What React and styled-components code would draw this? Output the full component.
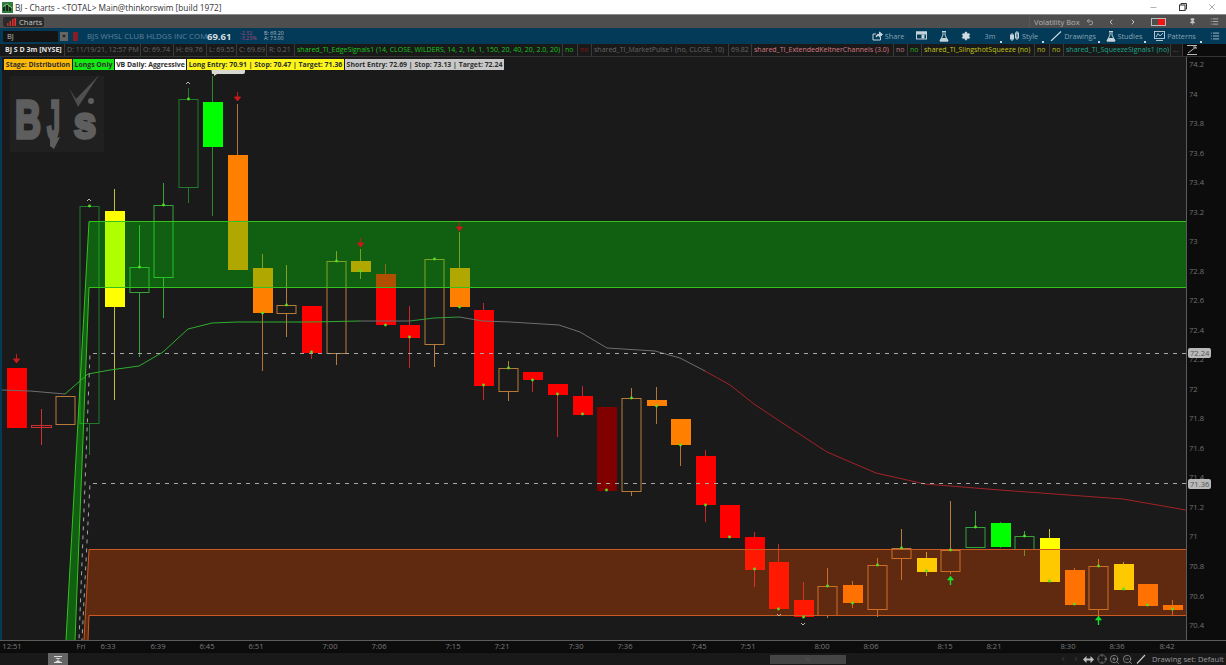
import React from 'react';
import styled, { createGlobalStyle } from 'styled-components';
import { ChevronLeft, ChevronRight, Crosshair, List, Minus, Pin, Settings, Undo2, X, ZoomIn, ZoomOut } from 'lucide-react';

const GlobalStyle = createGlobalStyle`
  html, body { margin: 0; padding: 0; background: #1a1a1a; }
  body { font-family: "Open Sans", "Liberation Sans", sans-serif; overflow: hidden; }
`;

const Page = styled.div`
  width: 1226px;
  height: 665px;
  display: flex;
  flex-direction: column;
  overflow: hidden;
  background: #033a58;
`;

const TitleBar = styled.div`
  height: 14px;
  background: #fff;
  display: flex;
  align-items: center;
  color: #333;
  font-size: 8.3px;
  padding-left: 2px;
  flex: none;
`;
const TitleText = styled.span`
  margin-left: 2px;
  flex: 1;
`;
const WinBtn = styled.div`
  width: 29px;
  display: flex;
  justify-content: center;
  color: #333;
`;

const TabBar = styled.div`
  height: 14px;
  background: #4e4e4e;
  border-top: 1px solid #8a8a8a;
  box-sizing: border-box;
  display: flex;
  align-items: center;
  flex: none;
`;
const Tab = styled.div`
  margin-left: 3px;
  width: 41px;
  height: 10px;
  background: #2b2b2b;
  border-radius: 2px;
  display: flex;
  align-items: center;
  gap: 3px;
  padding-left: 4px;
  box-sizing: border-box;
  color: #c8c8c8;
  font-size: 7.6px;
`;
const Spacer = styled.div`
  flex: 1;
`;
const TabLabel = styled.div`
  color: #b4b4b4;
  font-size: 7.6px;
  width: 53px;
  border-left: 1px solid #5a5a5a;
  padding-left: 4px;
  box-sizing: border-box;
  white-space: nowrap;
`;
const TabIcon = styled.div`
  width: ${(p) => p.$w}px;
  display: flex;
  justify-content: center;
  color: #c4c4c4;
`;
const Switch = styled.div`
  width: 15px;
  height: 8px;
  border: 1px solid #bbb;
  box-sizing: border-box;
  display: flex;
  justify-content: flex-end;
  &::after {
    content: '';
    width: 7px;
    background: #f01414;
  }
`;

const ToolBar = styled.div`
  height: 16px;
  background: #033a58;
  display: flex;
  align-items: center;
  flex: none;
  padding-left: 3px;
`;
const SymbolInput = styled.div`
  width: 55px;
  height: 11px;
  background: #141414;
  color: #bdbdbd;
  font-size: 7.5px;
  line-height: 11px;
  padding-left: 4px;
  box-sizing: border-box;
`;
const DropBtn = styled.div`
  width: 8px;
  height: 9px;
  margin-left: 2px;
  background: #666;
  display: flex;
  align-items: center;
  justify-content: center;
  &::after {
    content: '';
    border: 2px solid transparent;
    border-top: 3px solid #222;
    margin-top: 3px;
  }
`;
const SymbolMark = styled.div`
  width: 5px;
  height: 9px;
  margin-left: 5px;
  background: #8c1c24;
  border-radius: 1px;
`;
const CompanyName = styled.div`
  margin-left: 9px;
  width: 120px;
  color: #5f8298;
  font-size: 7.9px;
  white-space: nowrap;
`;
const LastPrice = styled.div`
  color: #d5dde2;
  font-size: 9.5px;
  font-weight: 700;
  width: 33px;
`;
const Stack = styled.div`
  width: ${(p) => p.$w}px;
  color: ${(p) => p.$color};
  font-size: 5.3px;
  line-height: 5.5px;
`;
const ToolGroup = styled.div`
  display: flex;
  margin-left: auto;
  height: 16px;
`;
const ToolItem = styled.div`
  position: relative;
  width: ${(p) => p.$w}px;
  display: flex;
  align-items: center;
  justify-content: center;
  gap: 2px;
  color: #86a3b6;
  font-size: 7.3px;
  white-space: nowrap;
  &::after {
    content: '';
    display: ${(p) => (p.$corner ? 'block' : 'none')};
    position: absolute;
    right: 1px;
    bottom: 1px;
    border-right: 2px solid #c8d4dc;
    border-bottom: 2px solid #c8d4dc;
    width: 0;
    height: 0;
  }
`;

const StudyRow = styled.div`
  height: 13px;
  background: #191919;
  display: flex;
  flex: none;
  padding-left: 3px;
  border-bottom: 1px solid #333;
  box-sizing: border-box;
`;
const StudyCell = styled.div`
  width: ${(p) => p.$w}px;
  flex: none;
  box-sizing: border-box;
  padding-left: 2px;
  color: ${(p) => p.$color || '#666'};
  font-size: ${(p) => p.$size || 7}px;
  font-weight: ${(p) => (p.$bold ? 700 : 400)};
  line-height: 12px;
  white-space: nowrap;
  overflow: hidden;
  border-right: 1px solid #3a3a3a;
`;
const CollapseCell = styled.div`
  flex: 1;
  background: #0c0c0c;
  display: flex;
  padding-left: 4px;
  align-items: center;
`;

const ChartRow = styled.div`
  position: relative;
  height: 583px;
  display: flex;
  flex: none;
  padding-left: 2px;
  background: #033a58;
`;
const ChartSvg = styled.svg`
  display: block;
  width: 1184px;
  height: 583px;
  flex: none;
  background: #1a1a1a;
`;
const PriceAxis = styled.div`
  position: relative;
  flex: 1;
  background: #0c0c0c;
  border-left: 1px solid #5c5c5c;
  overflow: hidden;
`;
const PriceTick = styled.div`
  position: absolute;
  left: 2px;
  color: #717171;
  font-size: 7.6px;
  line-height: 10px;
  transform: translateY(-50%);
`;
const PriceTag = styled(PriceTick)`
  left: 1px;
  padding: 0 2px;
  background: #b9b9b9;
  color: #555;
  border-radius: 2px;
`;
const LabelStrip = styled.div`
  position: absolute;
  top: 2px;
  left: 4px;
  display: flex;
  gap: 1px;
`;
const Badge = styled.div`
  width: ${(p) => p.$w}px;
  height: 11px;
  background: ${(p) => p.$bg};
  color: #2e2e2e;
  font-size: 6.9px;
  font-weight: 700;
  line-height: 11px;
  text-align: center;
  white-space: nowrap;
  overflow: hidden;
`;

const TimeAxis = styled.div`
  position: relative;
  height: 12px;
  background: #0c0c0c;
  border-top: 1px solid #5c5c5c;
  box-sizing: border-box;
  flex: none;
`;
const TimeTick = styled.div`
  position: absolute;
  top: 0;
  color: #7b7b7b;
  font-size: 7.6px;
  line-height: 11px;
  transform: translateX(-50%);
`;
const BottomBar = styled.div`
  height: 13px;
  background: #191919;
  display: flex;
  align-items: center;
  flex: none;
  border-top: 1px solid #0a0a0a;
  box-sizing: border-box;
`;
const ScrollHandle = styled.div`
  margin-left: 48px;
  width: 20px;
  height: 12px;
  background: #666;
  display: flex;
  align-items: center;
  justify-content: center;
`;
const ScrollThumb = styled.div`
  margin-left: 702px;
  width: 76px;
  height: 9px;
  background: #444;
  display: flex;
  align-items: center;
  justify-content: center;
  color: #777;
  font-size: 5px;
`;
const BottomTools = styled.div`
  margin-left: auto;
  display: flex;
  align-items: center;
  color: #c0c0c0;
`;
const BottomIcon = styled.div`
  width: 13px;
  display: flex;
  justify-content: center;
`;
const DrawingSet = styled.div`
  margin-left: 5px;
  width: 74px;
  color: #9a9a9a;
  font-size: 7.6px;
  white-space: nowrap;
`;

const RED = '#ff0000';
const ORANGE = '#ff8000';
const YELLOW = '#ffff00';
const LIME = '#00ff00';
const DARK = '#800000';

const WICK = {
  [RED]: '#c82828',
  [DARK]: '#7a1d1d',
  [ORANGE]: '#b47434',
  [YELLOW]: '#c4bc34',
  [LIME]: '#2d8a2d',
  dark: '#227a2c',
  green: '#35a53a',
  hollow: '#b87a38',
};

// x, wick top, wick bottom, body top, body bottom, colour, dot y. hollow candles use a stroke key
const candles = [
  [16, 368, 428, 368, 428, RED, null],
  [65, 396, 424, 396, 424, 'hollow', null],
  [89.5, 206, 455, 206, 423, 'dark', 206],
  [114.5, 189, 400, 211, 307, YELLOW, null],
  [139, 225, 357, 267, 292, 'green', 267],
  [163.5, 183, 318, 205, 277, 'green', 205],
  [188, 88, 203, 99, 187, 'dark', 99],
  [212.5, 76, 216, 102, 147, LIME, null],
  [237, 104, 270, 155, 270, ORANGE, null],
  [262, 254, 371, 268, 313, ORANGE, 313],
  [286.5, 265, 337, 305, 313, 'hollow', 305],
  [311, 306, 359, 306, 353, RED, 352],
  [336, 251, 365, 261, 353, 'hollow', 261],
  [360, 249, 279, 261, 272, ORANGE, 271],
  [385, 264, 325, 274, 325, RED, 325],
  [409.5, 306, 368, 325, 338, RED, 337],
  [434, 259, 367, 259, 344, 'hollow', 259],
  [459, 232, 307, 268, 307, ORANGE, 307],
  [483.5, 303, 400, 310, 386, RED, 385],
  [508, 361, 401, 368, 391, 'hollow', 368],
  [532.5, 372, 392, 372, 380, RED, 380],
  [557, 384, 437, 384, 395, RED, 394],
  [582, 386, 415, 396, 415, RED, 414],
  [606.5, 407, 491, 407, 491, DARK, 490],
  [631, 388, 496, 398, 491, 'hollow', 398],
  [656, 387, 424, 400, 406, ORANGE, 406],
  [680, 419, 466, 419, 445, ORANGE, 445],
  [705, 450, 522, 456, 505, RED, 505],
  [729.5, 505, 538, 505, 538, RED, 537],
  [754, 532, 587, 537, 570, RED, 569],
  [778.5, 544, 609, 562, 609, RED, 609],
  [803, 582, 617, 600, 617, RED, 617],
  [827.5, 568, 618, 586, 615, 'hollow', 586],
  [852.5, 581, 608, 585, 603, ORANGE, 603],
  [877, 558, 617, 565, 609, 'hollow', 565],
  [901.5, 529, 580, 548, 558, 'hollow', 548],
  [926, 552, 576, 558, 572, YELLOW, 571],
  [950.5, 501, 574, 550, 571, 'hollow', 550],
  [975.5, 511, 547, 527, 547, 'green', 527],
  [1000, 522, 548, 523, 547, LIME, null],
  [1024.5, 531, 556, 536, 549, 'green', 536],
  [1049.5, 529, 582, 538, 582, YELLOW, 581],
  [1074, 568, 605, 570, 605, ORANGE, 604],
  [1098, 559, 618, 566, 609, 'hollow', 566],
  [1123.5, 562, 590, 564, 590, YELLOW, 589],
  [1147.5, 584, 606, 584, 606, ORANGE, 605],
  [1172.5, 600, 615, 605, 610, ORANGE, 609],
];

const maLines = [
  { color: '#6e6e6e', points: '2,390 30,391 65,394' },
  { color: '#2fae2f', points: '65,394 88,374 110,370 139,366 163,352 188,329 212,323 237,322 262,322 311,322 360,321' },
  { color: '#6e6e6e', points: '360,321 410,321' },
  { color: '#2f9e3a', points: '410,321 434,318 459,317' },
  { color: '#6e6e6e', points: '459,317 483,321 510,322 559,325 580,332 607,348 655,351 680,358 705,371' },
  { color: '#a32228', points: '705,371 730,385 754,404 778,420 827,452 876,473 925,484 1000,490 1123,499 1186,510' },
];

const priceTicks = ['74.2', '74', '73.8', '73.6', '73.4', '73.2', '73', '72.8', '72.6', '72.4', '72.2', '72', '71.8', '71.6', '71.4', '71.2', '71', '70.8', '70.6', '70.4'];
const priceY = (i) => 7 + i * 29.53;

const timeTicks = [
  ['12:51', 12], ['Fri', 81], ['6:33', 108], ['6:39', 158], ['6:45', 207], ['6:51', 256], ['7:00', 330],
  ['7:06', 379], ['7:15', 453], ['7:21', 502], ['7:30', 576], ['7:36', 625], ['7:45', 699], ['7:51', 748],
  ['8:00', 822], ['8:06', 871], ['8:15', 945], ['8:21', 994], ['8:30', 1068], ['8:36', 1117], ['8:42', 1167],
];

const Candle = ({ c }) => {
  const [x, wt, wb, bt, bb, color] = c;
  const hollow = color === 'hollow' || color === 'dark' || color === 'green';
  const wick = WICK[color];
  const mid = Math.floor(x) + 0.5;
  return (
    <g>
      <line x1={mid} x2={mid} y1={wt} y2={wb} stroke={wick} strokeWidth="1" />
      {hollow ? (
        <rect x={mid - 9.5} y={bt + 0.5} width="19" height={bb - bt} fill="#1a1a1a" stroke={wick} strokeWidth="1" />
      ) : (
        <rect x={Math.floor(x) - 9} y={bt} width="20" height={bb - bt} fill={color} />
      )}
    </g>
  );
};

const DownArrow = ({ x, y }) => (
  <g stroke="#c41a1a" fill="#d01818" strokeWidth="1">
    <line x1={x} x2={x} y1={y - 5} y2={y + 4} />
    <path d={`M${x - 3} ${y} L${x + 3} ${y} L${x} ${y + 4} Z`} />
  </g>
);
const UpArrow = ({ x, y }) => (
  <g stroke="#18e030" fill="#18e030" strokeWidth="1.4">
    <line x1={x} x2={x} y1={y - 2} y2={y + 5} />
    <path d={`M${x - 3} ${y} L${x + 3} ${y} L${x} ${y - 4} Z`} strokeWidth="0.6" />
  </g>
);
const Caret = ({ x, y, down }) => (
  <path d={down ? `M${x - 2} ${y - 1} L${x} ${y + 1} L${x + 2} ${y - 1}` : `M${x - 2} ${y + 1} L${x} ${y - 1} L${x + 2} ${y + 1}`} fill="none" stroke="#c9b2a8" strokeWidth="1" />
);

const Chart = () => (
  <ChartSvg viewBox="2 57 1184 583">
    {/* watermark */}
    <rect x="10" y="76" width="94" height="76" fill="#202020" />
    <g fill="#5e5e5e" stroke="#5e5e5e" strokeWidth="3.6" fontFamily="Liberation Sans" fontWeight="700">
      <text x="15" y="138" fontSize="54" textLength="26" lengthAdjust="spacingAndGlyphs">B</text>
      <text x="47" y="138" fontSize="54" textLength="13" lengthAdjust="spacingAndGlyphs">J</text>
      <text x="74" y="138" fontSize="44" textLength="22" lengthAdjust="spacingAndGlyphs">s</text>
    </g>
    <path d="M69 88 L76 99 L99 75 L78 107 Z" fill="#4f4f4f" />
    <circle cx="91" cy="101" r="3" fill="#5e5e5e" />
    <path d="M50 139 L60 137 L54 149 L50 146 Z" fill="#5e5e5e" />

    {candles.map((c) => <Candle key={c[0]} c={c} />)}

    {/* red cross candle */}
    <g stroke="#d03030" strokeWidth="1">
      <line x1="41.5" x2="41.5" y1="409" y2="445" />
      <rect x="31.5" y="425.5" width="20" height="2" fill="none" />
    </g>

    {/* supply and demand zones */}
    <path d="M89 221 L1186 221 L1186 287 L89 287 L75 640 L66 640 Z" fill="rgba(0,255,0,0.31)" />
    <path d="M89 549 L1186 549 L1186 615 L89 615 L88 640 L84 640 Z" fill="rgba(255,80,0,0.31)" />
    <path d="M66 640 L89 221.5 L1186 221.5 M1186 287.5 L89 287.5 L75 640" fill="none" stroke="#35c21f" strokeWidth="1" />
    <path d="M84 640 L89 549.5 L1186 549.5 M1186 615.5 L89 615.5 L88 640" fill="none" stroke="#c85a22" strokeWidth="1" />

    {maLines.map((l) => (
      <polyline key={l.points} points={l.points} fill="none" stroke={l.color} strokeWidth="1" />
    ))}

    <path d="M1186 353.5 L90 353.5 L79 640 M1186 483.5 L90 483.5 L82 640" fill="none" stroke="#a8a8a8" strokeWidth="1" strokeDasharray="4 5" />

    {candles.filter((c) => c[6] !== null).map((c) => (
      <circle key={c[0]} cx={Math.floor(c[0]) + 0.5} cy={c[6]} r="1.4" fill="#55e020" />
    ))}

    <DownArrow x={16.5} y={359} />
    <DownArrow x={237.5} y={97} />
    <DownArrow x={360.5} y={243} />
    <DownArrow x={459.5} y={227} />
    <UpArrow x={950.5} y={580} />
    <UpArrow x={1098.5} y={620} />
    <Caret x={89} y={200} />
    <Caret x={188} y={83} />
    <Caret x={779} y={615} down />
    <Caret x={803} y={624} down />
    <path d="M211 66 L245 66 L245 72 Q245 74 243 74 L217 74 L214 76 L214 74 L212 74 Z" fill="#d8d8d0" />
  </ChartSvg>
);

const ChartIcon = () => (
  <svg width="9" height="8" viewBox="0 0 9 8">
    <rect x="0" y="5" width="1.5" height="3" fill="#a83030" />
    <rect x="2.5" y="3" width="1.5" height="5" fill="#d03030" />
    <rect x="5" y="1" width="1.5" height="7" fill="#e03030" />
    <rect x="7.5" y="0" width="1.5" height="8" fill="#f03030" />
  </svg>
);

const AppLogo = () => (
  <svg width="11" height="11" viewBox="0 0 11 11">
    <rect width="11" height="11" fill="#2f7d3a" />
    <path d="M2 9 L2 4 M5 9 L5 2 M8 9 L8 5" stroke="#111" strokeWidth="1.6" />
    <path d="M1 5 L5 2 L10 6" stroke="#b8e0a0" strokeWidth="0.8" fill="none" />
  </svg>
);

const ShareIcon = () => (
  <svg width="11" height="10" viewBox="0 0 11 10" fill="none" stroke="#c4d2da" strokeWidth="1">
    <path d="M8.5 6 V9 H1 V3 H4" />
    <path d="M4 6 Q4.5 3 7.5 3 V1 L10.5 3.5 L7.5 6 V4.4 Q5.4 4.4 4 6 Z" fill="#c4d2da" />
  </svg>
);
const AlertIcon = () => (
  <svg width="11" height="10" viewBox="0 0 11 10" fill="none" stroke="#c4d2da" strokeWidth="1">
    <rect x="0.5" y="1" width="10" height="7" />
    <rect x="0.5" y="1" width="10" height="2" fill="#c4d2da" />
    <rect x="6" y="4" width="2" height="3" fill="#c4d2da" />
  </svg>
);
const FlaskIcon = ({ size = 10 }) => (
  <svg width={size} height={size + 1} viewBox="0 0 10 11" fill="none" stroke="#c4d2da" strokeWidth="1">
    <path d="M3 0.5 H7 M4 0.5 V4 L1 10 H9 L6 4 V0.5" />
    <path d="M2.5 7.5 H7.5 L9 10 H1 Z" fill="#c4d2da" />
  </svg>
);
const StyleIcon = () => (
  <svg width="10" height="10" viewBox="0 0 10 10" stroke="#c4d2da" fill="#c4d2da">
    <line x1="2" y1="2" x2="2" y2="10" />
    <rect x="0.5" y="4" width="3" height="4" />
    <line x1="7" y1="0" x2="7" y2="9" />
    <rect x="5.5" y="2" width="3" height="5" fill="none" />
  </svg>
);
const PenIcon = () => (
  <svg width="12" height="10" viewBox="0 0 12 10" stroke="#d0dce3" strokeWidth="1.1">
    <line x1="1" y1="10" x2="11" y2="0.5" />
  </svg>
);
const PatternIcon = () => (
  <svg width="11" height="10" viewBox="0 0 11 10" fill="none" stroke="#c4d2da" strokeWidth="0.9">
    <rect x="0.5" y="0.5" width="10" height="7" />
    <path d="M2 6 L4 2.5 L6 5 L9 2" />
    <path d="M2 9.5 H9" />
  </svg>
);
const CollapseIcon = () => (
  <svg width="11" height="10" viewBox="0 0 11 10" fill="none" stroke="#b8b8b8" strokeWidth="1">
    <path d="M0 0.5 H10 M0 9.5 H10 M1 8 L9 2 M9 2 H6 M9 2 V4" />
  </svg>
);
const HandleIcon = () => (
  <svg width="8" height="7" viewBox="0 0 8 7" fill="#ddd">
    <rect width="8" height="1" />
    <path d="M1 2 H7 L4 3.6 Z M1 6 H7 L4 4 Z" />
    <rect y="6" width="8" height="1" />
  </svg>
);
const PanIcon = () => (
  <svg width="11" height="7" viewBox="0 0 11 7" fill="#c0c0c0">
    <path d="M0 3.5 L3.5 0 V2.5 H7.5 V0 L11 3.5 L7.5 7 V4.5 H3.5 V7 Z" />
  </svg>
);
const BottomPen = () => (
  <svg width="10" height="10" viewBox="0 0 10 10" stroke="#c8c8c8" strokeWidth="1.1">
    <line x1="1" y1="9.5" x2="9" y2="1" />
  </svg>
);

const App = () => (
  <Page>
    <GlobalStyle />
    <TitleBar>
      <AppLogo />
      <TitleText>BJ - Charts - &lt;TOTAL&gt; Main@thinkorswim [build 1972]</TitleText>
      <WinBtn><Minus size={9} strokeWidth={1} /></WinBtn>
      <WinBtn>
        <svg width="8" height="8" viewBox="0 0 8 8" fill="none" stroke="#333">
          <rect x="0.5" y="2" width="5.5" height="5.5" />
          <path d="M2 2 V0.5 H7.5 V6 H6" />
        </svg>
      </WinBtn>
      <WinBtn><X size={10} strokeWidth={1} /></WinBtn>
    </TitleBar>

    <TabBar>
      <Tab><ChartIcon />Charts</Tab>
      <Spacer />
      <TabLabel>Volatility Box</TabLabel>
      <TabIcon $w={16}><Undo2 size={8} /></TabIcon>
      <TabIcon $w={26}><ChevronLeft size={8} strokeWidth={3} /></TabIcon>
      <TabIcon $w={18}><ChevronRight size={8} strokeWidth={3} /></TabIcon>
      <TabIcon $w={32}><Switch /></TabIcon>
      <TabIcon $w={8} />
      <TabIcon $w={20}><Pin size={7} fill="#c4c4c4" /></TabIcon>
      <TabIcon $w={24}><List size={9} /></TabIcon>
    </TabBar>

    <ToolBar>
      <SymbolInput>BJ</SymbolInput>
      <DropBtn />
      <SymbolMark />
      <CompanyName>BJS WHSL CLUB HLDGS INC COM</CompanyName>
      <LastPrice>69.61</LastPrice>
      <Stack $w={24} $color="#b04a78">-2.32<br />-3.23%</Stack>
      <Stack $w={40} $color="#a9b9c4">B: 69.20<br />A: 73.00</Stack>
      <ToolGroup>
        <ToolItem $w={44}><ShareIcon />Share</ToolItem>
        <ToolItem $w={23}><AlertIcon /></ToolItem>
        <ToolItem $w={22}><FlaskIcon /></ToolItem>
        <ToolItem $w={22}><Settings size={10} color="#d0dce3" fill="#d0dce3" strokeWidth={1} /></ToolItem>
        <ToolItem $w={26} $corner>3m</ToolItem>
        <ToolItem $w={42} $corner><StyleIcon />Style</ToolItem>
        <ToolItem $w={56} $corner><PenIcon />Drawings</ToolItem>
        <ToolItem $w={46} $corner><FlaskIcon />Studies</ToolItem>
        <ToolItem $w={56} $corner><PatternIcon />Patterns</ToolItem>
        <ToolItem $w={23}><List size={10} color="#c4d2da" /></ToolItem>
      </ToolGroup>
    </ToolBar>

    <StudyRow>
      <StudyCell $w={62} $color="#e2e2e2" $bold>BJ S D 3m [NYSE]</StudyCell>
      <StudyCell $w={76}>D: 11/19/21, 12:57 PM</StudyCell>
      <StudyCell $w={33}>O: 69.74</StudyCell>
      <StudyCell $w={33}>H: 69.76</StudyCell>
      <StudyCell $w={30}>L: 69.55</StudyCell>
      <StudyCell $w={30}>C: 69.69</StudyCell>
      <StudyCell $w={28}>R: 0.21</StudyCell>
      <StudyCell $w={268} $color="#16c51c">shared_TI_EdgeSignals1 (14, CLOSE, WILDERS, 14, 2, 14, 1, 150, 20, 40, 20, 2.0, 20)</StudyCell>
      <StudyCell $w={15} $color="#16b51c">no</StudyCell>
      <StudyCell $w={14} $color="#8a1212">no</StudyCell>
      <StudyCell $w={137}>shared_TI_MarketPulse1 (no, CLOSE, 10)</StudyCell>
      <StudyCell $w={23}>69.82</StudyCell>
      <StudyCell $w={142} $color="#d87a82">shared_TI_ExtendedKeltnerChannels (3.0)</StudyCell>
      <StudyCell $w={14} $color="#b87a7a">no</StudyCell>
      <StudyCell $w={14} $color="#2aaa2a">no</StudyCell>
      <StudyCell $w={113} $color="#c8c814">shared_TI_SlingshotSqueeze (no)</StudyCell>
      <StudyCell $w={15} $color="#b8b820">no</StudyCell>
      <StudyCell $w={14} $color="#b8b820">no</StudyCell>
      <StudyCell $w={107} $color="#1aa890">shared_TI_SqueezeSignals1 (no)</StudyCell>
      <StudyCell $w={12}>...</StudyCell>
      <CollapseCell><CollapseIcon /></CollapseCell>
    </StudyRow>

    <ChartRow>
      <Chart />
      <LabelStrip>
        <Badge $w={68} $bg="#fdb90a">Stage: Distribution</Badge>
        <Badge $w={41} $bg="#12e812">Longs Only</Badge>
        <Badge $w={71} $bg="#ffffff">VB Daily: Aggressive</Badge>
        <Badge $w={157} $bg="#fcf51c">Long Entry: 70.91 | Stop: 70.47 | Target: 71.36</Badge>
        <Badge $w={159} $bg="#c8c8c8">Short Entry: 72.69 | Stop: 73.13 | Target: 72.24</Badge>
      </LabelStrip>
      <PriceAxis>
        {priceTicks.map((t, i) => (
          <PriceTick key={t} style={{ top: priceY(i) }}>{t}</PriceTick>
        ))}
        <PriceTag style={{ top: 296 }}>72.24</PriceTag>
        <PriceTag style={{ top: 426.5 }}>71.36</PriceTag>
      </PriceAxis>
    </ChartRow>

    <TimeAxis>
      {timeTicks.map(([t, x]) => (
        <TimeTick key={t} style={{ left: x }}>{t}</TimeTick>
      ))}
    </TimeAxis>

    <BottomBar>
      <ScrollHandle><HandleIcon /></ScrollHandle>
      <ScrollThumb>:::</ScrollThumb>
      <BottomTools>
        <BottomIcon><ChevronLeft size={6} color="#666" /></BottomIcon>
        <BottomIcon><ChevronRight size={6} color="#666" /></BottomIcon>
        <BottomIcon><PanIcon /></BottomIcon>
        <BottomIcon><Crosshair size={10} strokeWidth={1} /></BottomIcon>
        <BottomIcon><ZoomIn size={11} strokeWidth={1.2} /></BottomIcon>
        <BottomIcon><ZoomOut size={11} strokeWidth={1.2} /></BottomIcon>
        <BottomIcon><BottomPen /></BottomIcon>
        <DrawingSet>Drawing set: Default</DrawingSet>
      </BottomTools>
    </BottomBar>
  </Page>
);

export default App;
